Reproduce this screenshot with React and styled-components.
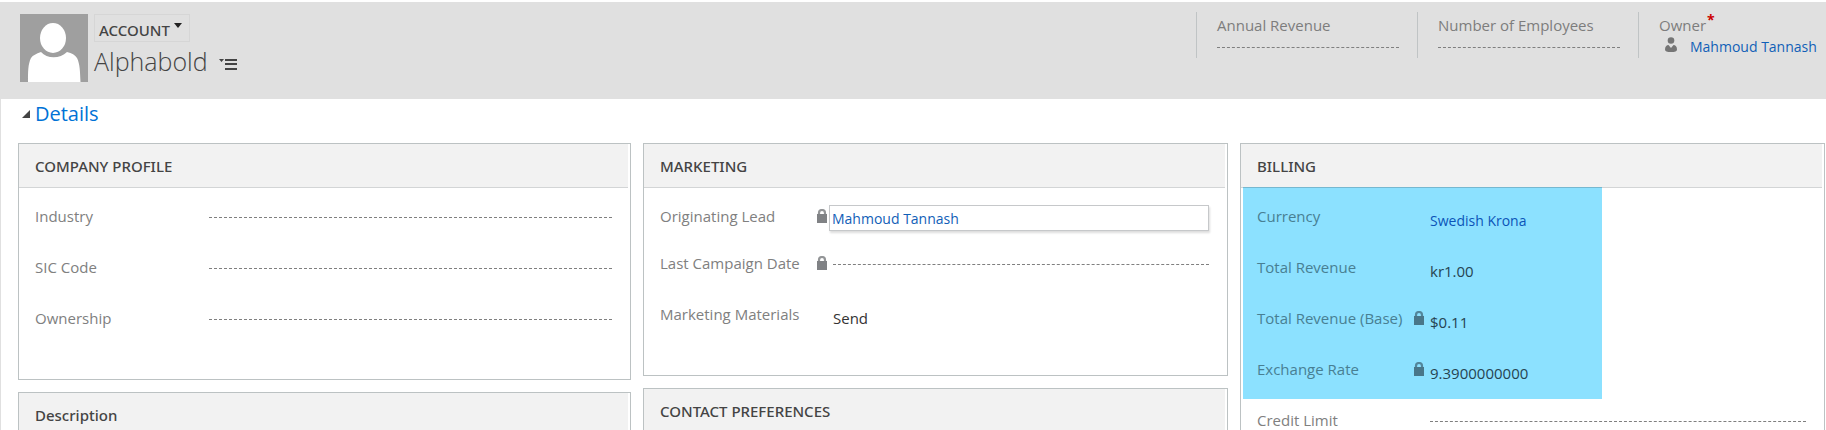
import React from "react";
import styled, { createGlobalStyle } from "styled-components";

const GlobalStyle = createGlobalStyle`
  * { box-sizing: border-box; }
  body { margin: 0; background: #fff; overflow: hidden; color: #444;
    font: 15px/20px "Open Sans", "Noto Sans", sans-serif; }
  h1, h2, h3, dl, dd { margin: 0; font-weight: 400; }
  button { font: inherit; color: inherit; background: none; border: 0; padding: 0; cursor: pointer; }
`;

const Page = styled.div`
  padding-top: 2px;
`;

const Header = styled.header`
  display: flex;
  justify-content: space-between;
  height: 97px;
  padding: 10px 0 0 20px;
  background: #e0e0e0;
`;

const Identity = styled.div`
  display: flex;
  align-items: flex-start;
  gap: 6px;
  padding-top: 2px;
`;

const Avatar = styled.svg`
  display: block;
  width: 68px;
  height: 68px;
`;

const EntityButton = styled.button`
  display: flex;
  gap: 4px;
  height: 28px;
  padding: 5px 7px 0 4px;
  border: 1px solid #d6d6d6;
  font-family: "Noto Sans", "Open Sans", sans-serif;
  font-weight: 500;
  svg { margin-top: 3px; }
`;

const TitleRow = styled.div`
  display: flex;
  align-items: center;
  gap: 11px;
`;

const Title = styled.h1`
  font: 300 25px/38px "Open Sans", "Noto Sans", sans-serif;
`;

const MenuButton = styled.button`
  display: flex;
  padding-top: 6px;
`;

const HeaderFields = styled.dl`
  display: flex;
`;

const HeaderField = styled.div`
  width: 221px;
  height: 46px;
  padding: 0 18px 0 20px;
  border-left: 1px solid #c0c4c5;
  &:last-child { width: 188px; padding-right: 0; }
`;

const HeaderLabel = styled.dt`
  display: flex;
  padding-top: 3px;
  color: #7d7d7d;
`;

const Required = styled.span`
  margin: -5px 0 0 1px;
  color: #c00;
  font-size: 14px;
  font-weight: 700;
`;

const HeaderValue = styled.dd`
  display: flex;
  gap: 13px;
  padding: ${(p) => (p.$owner ? "2px 0 0 6px" : "0")};
`;

const Dashes = styled.span`
  display: block;
  width: 100%;
  margin-top: ${(p) => (p.$header ? "12px" : "11px")};
  border-top: 1px dashed #7f7f7f;
`;

const Link = styled.a`
  color: #1160b7;
  font-size: 14px;
  text-decoration: none;
  white-space: nowrap;
`;

const Body = styled.main`
  padding: 0 1px 0 17px;
  border-left: 1px solid #e0e0e0;
`;

const SectionTitle = styled.h2`
  padding: 0 0 0 4px;
`;

const SectionToggle = styled.button`
  display: flex;
  align-items: center;
  gap: 5px;
  color: #0072d6;
  font-size: 20px;
  line-height: 30px;
`;

const Columns = styled.div`
  display: grid;
  grid-template-columns: 613fr 585fr 585fr;
  column-gap: 12px;
  align-items: start;
  padding-top: 14px;
`;

const Column = styled.div`
  display: grid;
  row-gap: 12px;
`;

const Panel = styled.section`
  min-height: ${(p) => p.$minHeight || 0}px;
  border: 1px solid #bcc2c3;
`;

const PanelTitle = styled.h3`
  height: 44px;
  margin-right: 2px;
  padding: 12px 16px 0;
  border-bottom: 1px solid #d3d5d6;
  background: #f2f2f2;
  font-family: "Noto Sans", "Open Sans", sans-serif;
  font-size: 15px;
  font-weight: 500;
`;

const Rows = styled.dl`
  padding: 18px 0 0;
`;

const Row = styled.div`
  display: flex;
  height: ${(p) => (p.$tight ? "47px" : "51px")};
  padding: 0 18px 0 ${(p) => (p.$inset ? "14px" : "16px")};
`;

const Highlight = styled.div`
  width: 359px;
  margin: -19px 0 11px 2px;
  padding: 18px 0 0;
  border-top: 1px solid #76b8d0;
  background: #8ce1ff;
  --label: #487f93;
  --value: #264451;
  --link: #0b54b8;
  --lock: #497689;
  ${Row}:last-child { height: 40px; }
`;

const Label = styled.dt`
  flex: none;
  width: ${(p) => p.$width}px;
  color: var(--label, #808080);
`;

const LockSlot = styled.span`
  flex: none;
  width: 16px;
  color: var(--lock, #808285);
  svg { display: block; margin-top: 3px; }
`;

const Value = styled.dd`
  flex: 1;
  min-width: 0;
  padding-top: ${(p) => (p.$text ? "4px" : "0")};
  color: var(--value, #333);
  ${Link} { color: var(--link, #1160b7); }
`;

const LookupInput = styled.input`
  display: block;
  width: calc(100% + 4px);
  height: 26px;
  margin: -1px 0 0 -4px;
  padding: 0 2px;
  border: 1px solid #c6c8ca;
  box-shadow: 1px 2px 2px #ddd;
  outline: 0;
  color: #1160b7;
  font: inherit;
  font-size: 14px;
`;

const LockIcon = () => (
  <svg width="10" height="14" viewBox="0 0 10 14" aria-hidden="true">
    <path d="M2 6V4a3 3 0 0 1 6 0V6" fill="none" stroke="currentColor" strokeWidth="2.200" opacity=".85" />
    <path d="M0 5h10v9H0z" fill="currentColor" />
  </svg>
);

const PersonIcon = () => (
  <svg width="12" height="16" viewBox="0 0 12 16" aria-hidden="true" fill="#757575">
    <circle cx="6" cy="3.500" r="3.300" />
    <path d="M0 12.500c0-3 1.500-4.500 3.500-4.500L6 11l2.500-3c2 0 3.500 1.500 3.500 4.500 0 2-2 2.500-6 2.500s-6-.5-6-2.500z" />
  </svg>
);

const Field = ({ label, labelWidth, locked, tight, inset, text, id, children }) => (
  <Row $tight={tight} $inset={inset}>
    <Label $width={labelWidth}>{id ? <label htmlFor={id}>{label}</label> : label}</Label>
    <LockSlot>{locked && <LockIcon />}</LockSlot>
    <Value $text={text}>{children || <Dashes />}</Value>
  </Row>
);

export default function App() {
  return (
    <Page>
      <GlobalStyle />
      <Header>
        <Identity>
          <Avatar viewBox="0 0 68 68" role="img" aria-label="Account image">
            <path d="M0 0h68v68H0z" fill="#9f9f9f" />
            <ellipse cx="33" cy="24" rx="13" ry="15" fill="#fff" />
            <path d="M8 68c0-10 0-18 3-24 2-3 5-4 10-6 6 7 19 7 26 0 5 1 8 3 10 6 3 6 3 14 3.500 24z" fill="#fff" />
          </Avatar>
          <div>
            <EntityButton>
              ACCOUNT
              <svg width="8" height="5" viewBox="0 0 8 5" aria-hidden="true"><path d="M0 0h8L4 5z" fill="#222" /></svg>
            </EntityButton>
            <TitleRow>
              <Title>Alphabold</Title>
              <MenuButton aria-label="Form menu">
                <svg width="18" height="12" viewBox="0 0 18 12" aria-hidden="true" fill="#444">
                  <path d="M0 1h5L2.500 4zM6 1h12v2H6zM6 5h12v2H6zM6 10h12v2H6z" />
                </svg>
              </MenuButton>
            </TitleRow>
          </div>
        </Identity>
        <HeaderFields>
          <HeaderField>
            <HeaderLabel>Annual Revenue</HeaderLabel>
            <HeaderValue><Dashes $header /></HeaderValue>
          </HeaderField>
          <HeaderField>
            <HeaderLabel>Number of Employees</HeaderLabel>
            <HeaderValue><Dashes $header /></HeaderValue>
          </HeaderField>
          <HeaderField>
            <HeaderLabel>Owner<Required>*</Required></HeaderLabel>
            <HeaderValue $owner><PersonIcon /><Link href="#owner">Mahmoud Tannash</Link></HeaderValue>
          </HeaderField>
        </HeaderFields>
      </Header>
      <Body>
        <SectionTitle>
          <SectionToggle aria-expanded="true">
            <svg width="8" height="8" viewBox="0 0 8 8" aria-hidden="true"><path d="M8 0v8H0z" fill="#444" /></svg>
            Details
          </SectionToggle>
        </SectionTitle>
        <Columns>
          <Column>
            <Panel $minHeight={237}>
              <PanelTitle>COMPANY PROFILE</PanelTitle>
              <Rows>
                <Field label="Industry" labelWidth={158} />
                <Field label="SIC Code" labelWidth={158} />
                <Field label="Ownership" labelWidth={158} />
              </Rows>
            </Panel>
            <Panel>
              <PanelTitle>Description</PanelTitle>
            </Panel>
          </Column>
          <Column>
            <Panel $minHeight={233}>
              <PanelTitle>MARKETING</PanelTitle>
              <Rows>
                <Field label="Originating Lead" labelWidth={157} locked tight id="originating-lead">
                  <LookupInput id="originating-lead" readOnly defaultValue="Mahmoud Tannash" />
                </Field>
                <Field label="Last Campaign Date" labelWidth={157} locked />
                <Field label="Marketing Materials" labelWidth={157} text>Send</Field>
              </Rows>
            </Panel>
            <Panel>
              <PanelTitle>CONTACT PREFERENCES</PanelTitle>
            </Panel>
          </Column>
          <Column>
            <Panel>
              <PanelTitle>BILLING</PanelTitle>
              <Rows>
                <Highlight>
                  <Field label="Currency" labelWidth={157} inset text><Link href="#currency">Swedish Krona</Link></Field>
                  <Field label="Total Revenue" labelWidth={157} inset text>kr1.00</Field>
                  <Field label="Total Revenue (Base)" labelWidth={157} inset text locked>$0.11</Field>
                  <Field label="Exchange Rate" labelWidth={157} inset text locked>9.3900000000</Field>
                </Highlight>
                <Field label="Credit Limit" labelWidth={157} />
              </Rows>
            </Panel>
          </Column>
        </Columns>
      </Body>
    </Page>
  );
}
